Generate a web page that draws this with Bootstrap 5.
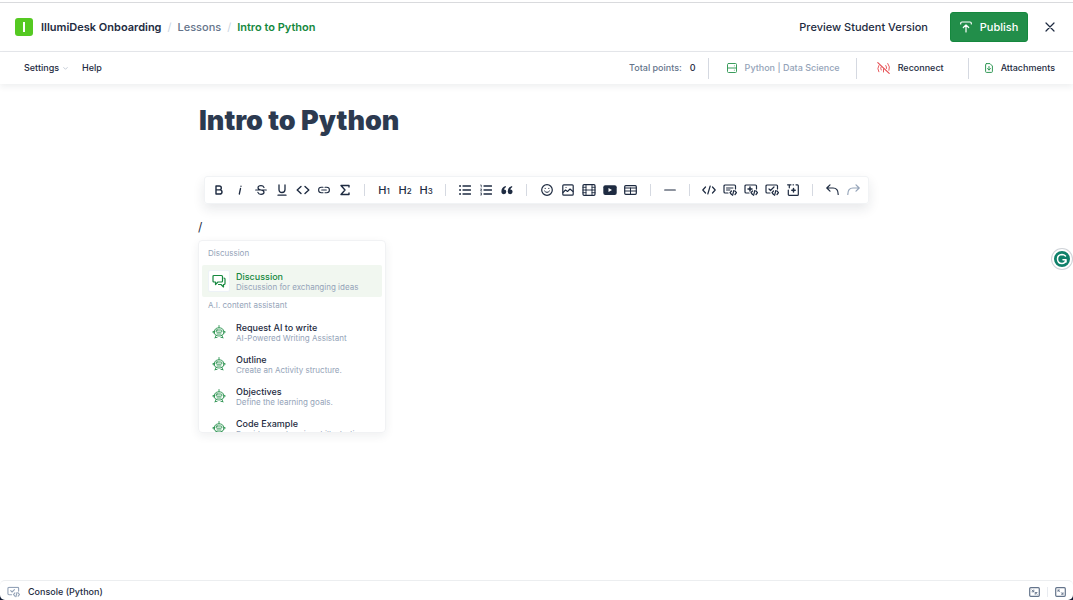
<!DOCTYPE html>
<html lang="en">
<head>
<meta charset="utf-8">
<meta name="viewport" content="width=device-width, initial-scale=1">
<title>Intro to Python</title>
<link href="https://cdn.jsdelivr.net/npm/bootstrap@5.3.0/dist/css/bootstrap.min.css" rel="stylesheet">
<style>
  :root { --ink: #1e2b41; --slate: #64748b; --mist: #94a3b8; --line: #e5e7eb; --leaf: #15883e; }
  body { font-family: Inter, "Liberation Sans", sans-serif; font-size: 9px; line-height: 12px; font-weight: 500; color: var(--ink); background: #fff; }
  a { color: inherit; text-decoration: none; }
  svg { display: block; flex: none; fill: none; stroke: currentColor; stroke-width: 1.2; stroke-linecap: round; stroke-linejoin: round; }
  svg.fine { stroke-width: .8; }
  .plain { border: 0; padding: 0; background: none; color: inherit; font: inherit; }
  .topbar { height: 50px; margin-top: 2px; padding: 0 17px 0 15px; border-top: 1px solid #d9dadd; border-bottom: 1px solid var(--line); font-size: 11px; line-height: 16px; }
  .logo-tile { width: 18px; height: 18px; border-radius: 3px; background: #55c922; }
  .logo-tile span { width: 2px; height: 10px; background: #fff; }
  .crumbs { gap: 6px; }
  .crumbs .sep { color: #cbd5e1; font-weight: 400; }
  .crumbs .parent { color: var(--slate); }
  .crumbs .current { color: var(--leaf); }
  .header-actions { gap: 22px; }
  .publish { height: 30px; width: 78px; gap: 8px; border: 1px solid #15883e; border-radius: 3px; background: #228e4a; color: #fff; font-size: 11px; font-weight: 500; }
  .subbar { height: 32px; padding: 0 18px 0 24px; box-shadow: 0 3px 6px rgba(30,41,59,.07); }
  .subbar-menu { gap: 14px; }
  .vr-line { width: 1px; height: 21px; background: #d5d9e1; }
  .after-points { margin: 0 18px 0 12px; }
  .after-kernel { margin: 0 20px 0 16px; }
  .editor { width: 100%; max-width: 675px; }
  .page-title { font-size: 27px; line-height: 36px; font-weight: 900; color: #2c3a50; margin: 19px 0 0; }
  .tools { margin: 37px 5px 0; height: 28px; padding: 0 4px 0 3px; border: 1px solid #f1f3f5; border-radius: 3px; box-shadow: 0 5px 12px rgba(30,41,59,.10); }
  .tool { width: 21px; height: 22px; display: flex; align-items: center; justify-content: center; }
  .tool.heading { align-items: baseline; font-size: 11px; line-height: 22px; }
  .tool.heading span { font-size: 8px; }
  .tool-sep { width: 18px; display: flex; justify-content: center; }
  .tool-sep::before { content: ""; width: 1px; height: 12px; background: #d5d9e1; }
  .typed { margin: 15px 0 0 -1px; font-size: 12px; line-height: 16px; font-weight: 400; }
  .slash-menu { width: 188px; height: 193px; margin: 5px 0 0 -1px; padding: 0 3px; overflow: hidden; border: 1px solid #f1f2f4; border-radius: 4px; box-shadow: 0 3px 10px rgba(30,41,59,.07); font-size: 9px; line-height: 11px; }
  .group-name { padding: 7px 6px; margin: 0; font-size: 8px; line-height: 10px; font-weight: 400; color: var(--mist); }
  .option + .group-name { padding: 3px 6px 6px; }
  .option { width: 100%; height: 32px; padding: 0 6px; gap: 6px; text-align: left; border-radius: 2px; }
  .option .tile { width: 22px; height: 22px; border-radius: 2px; color: var(--leaf); display: flex; align-items: center; justify-content: center; }
  .option .desc { font-size: 8px; line-height: 10px; font-weight: 400; color: var(--mist); white-space: nowrap; }
  .option.chosen { background: #f1f7f0; color: var(--leaf); }
  .option.chosen .tile { background: #fff; border: 1px solid #edf2f7; }
  .dock { background: linear-gradient(#fff 50%, #101a33 50%); }
  .dock-in { height: 20px; padding: 3px 7px 0 7px; border-top: 1px solid #eceef0; border-radius: 5px; background: #fff; }
  .dock-actions { gap: 7px; color: #64748b; }
  .dock-line { width: 1px; height: 10px; background: #e8ebf0; }
  .helper { right: 1px; top: 249px; width: 20px; height: 20px; border-radius: 50%; background: #0f806a; border: 2px solid #fff; box-shadow: 0 0 0 1px #cfd3d8; color: #fff; }
</style>
</head>
<body class="d-flex flex-column min-vh-100">

<svg width="0" height="0" class="position-absolute" aria-hidden="true">
  <symbol id="chat" viewBox="0 0 14 14"><path d="M2 1.500H9.500Q10.500 1.500 10.500 2.500V7Q10.500 8 9.500 8H6L3.500 10.500V8H2Q1 8 1 7V2.500Q1 1.500 2 1.500M12 4Q13 4 13 5V9.500Q13 10.500 12 10.500H11.500V13L9 10.500H6.500"/></symbol>
  <symbol id="robot" viewBox="0 0 14 14"><path d="M7 .5V2.800M2.300 7Q2.300 2.800 7 2.800Q11.700 2.800 11.700 7Q11.700 11 7 11Q2.300 11 2.300 7ZM2.300 6L.6 7L2.300 8.500M11.700 6L13.400 7L11.700 8.500M5 5H9Q10 5 10 6Q10 7.200 9 7.200H5Q4 7.200 4 6Q4 5 5 5ZM5 9H9M4 10.500L3 13M10 10.500L11 13M3.500 12.500H5M9 12.500H10.500"/></symbol>
  <symbol id="code-corner" viewBox="0 0 14 12"><path d="M5 9H2.200Q1 9 1 8V2Q1 1 2.200 1H11.500Q12.500 1 12.500 2V5M8.500 7L7 8.700L8.500 10.500M12 7L13.500 8.700L12 10.500M10.800 6.500L9.600 11.300"/></symbol>
</svg>

<header class="topbar d-flex align-items-center justify-content-between">
  <nav aria-label="Breadcrumb" class="d-flex align-items-center">
    <a href="#" class="logo-tile d-flex align-items-center justify-content-center me-2" aria-label="Home"><span></span></a>
    <ol class="crumbs list-unstyled d-flex m-0">
      <li class="fw-semibold"><a href="#">IllumiDesk Onboarding</a></li>
      <li class="sep" aria-hidden="true">/</li>
      <li class="parent"><a href="#">Lessons</a></li>
      <li class="sep" aria-hidden="true">/</li>
      <li class="current fw-semibold" aria-current="page">Intro to Python</li>
    </ol>
  </nav>
  <div class="header-actions d-flex align-items-center">
    <a href="#">Preview Student Version</a>
    <div class="d-flex align-items-center gap-3">
      <button type="button" class="publish d-flex align-items-center justify-content-center p-0">
        <svg width="12" height="12" viewBox="0 0 12 12"><path d="M.7 3V2.300Q.7 1 2 1H10Q11.300 1 11.300 2.300V3M6 11V4M3.300 6.500L6 3.800L8.700 6.500"/></svg>Publish
      </button>
      <button type="button" class="plain" aria-label="Close"><svg width="12" height="12" viewBox="0 0 12 12"><path d="M2 2L10 10M10 2L2 10"/></svg></button>
    </div>
  </div>
</header>

<nav class="subbar d-flex align-items-center justify-content-between">
  <div class="subbar-menu d-flex align-items-center">
    <button type="button" class="plain d-flex align-items-center gap-1">Settings
      <svg width="5" height="5" viewBox="0 0 5 5" style="color:#b6bfcc" class="fine"><path d="M.7 1.500L2.500 3.300L4.300 1.500"/></svg></button>
    <a href="#">Help</a>
  </div>
  <div class="d-flex align-items-center">
    <span style="color:var(--slate)">Total points:</span><span class="ms-2">0</span>
    <span class="vr-line after-points"></span>
    <a href="#" class="d-flex align-items-center gap-2" style="color:var(--mist)">
      <svg width="10" height="10" viewBox="0 0 10 10" style="color:#3a9d5c"><path d="M1.500 .5H8.500Q9.500 .5 9.500 1.500V8.500Q9.500 9.500 8.500 9.500H1.500Q.5 9.500 .5 8.500V1.500Q.5 .5 1.500 .5ZM.5 5H9.500" stroke-width="1"/><path d="M7.300 2.800H7.400M7.300 7.200H7.400" stroke-width=".8"/></svg>Python | Data Science</a>
    <span class="vr-line after-kernel"></span>
    <button type="button" class="plain d-flex align-items-center gap-2">
      <svg width="13" height="12" viewBox="0 0 13 12" style="color:#e5484d"><path d="M.8 .6L12.200 11.400" stroke-width="1.100"/><path d="M1.800 3.500Q-.2 6.500 1.800 9.800M4 5Q3.300 6.500 4.200 8M10.800 1.500Q13.500 4.800 12 8.300M8.800 3.500Q9.900 5 9.500 6.500M6.500 7V10" stroke-width=".9"/></svg>Reconnect</button>
    <span class="vr-line ms-4 me-3"></span>
    <a href="#" class="d-flex align-items-center gap-2">
      <svg width="8" height="10" viewBox="0 0 8 10" style="color:#2f9854"><path d="M1.500 .6H5L7.400 3V8.500Q7.400 9.400 6.500 9.400H1.500Q.6 9.400 .6 8.500V1.500Q.6 .6 1.500 .6ZM4 3.500V7M2.500 5.600L4 7L5.500 5.600" stroke-width="1"/></svg>Attachments</a>
  </div>
</nav>

<main class="editor mx-auto flex-grow-1">
  <h1 class="page-title">Intro to Python</h1>

  <div class="tools d-flex align-items-center justify-content-between" role="toolbar" aria-label="Formatting">
    <button type="button" class="plain tool" aria-label="Bold"><svg width="12" height="12" viewBox="0 0 12 12"><path d="M3 2V10H6.700Q9 10 9 7.900Q9 5.900 6.700 5.900H3M3 2H6.300Q8.300 2 8.300 3.900Q8.300 5.900 6.300 5.900" stroke-width="1.400"/></svg></button>
    <button type="button" class="plain tool" aria-label="Italic"><svg width="12" height="12" viewBox="0 0 12 12"><path d="M6.500 4.500L5.300 10M7 2.200V2.300" stroke-width="1.300"/></svg></button>
    <button type="button" class="plain tool" aria-label="Strikethrough"><svg width="12" height="12" viewBox="0 0 12 12"><path d="M.7 6H11.300M9 3.500Q8.300 1.700 6 1.700Q3 1.700 3 3.700Q3 5.500 6 6Q9 6.500 9 8.300Q9 10.300 6 10.300Q3.500 10.300 2.900 8.300"/></svg></button>
    <button type="button" class="plain tool" aria-label="Underline"><svg width="12" height="12" viewBox="0 0 12 12"><path d="M3 1V5.500Q3 8.500 6 8.500Q9 8.500 9 5.500V1M2 11.200H10" stroke-width="1.300"/></svg></button>
    <button type="button" class="plain tool" aria-label="Inline code"><svg width="14" height="12" viewBox="0 0 14 12"><path d="M5 2.500L1.200 6L5 9.500M9 2.500L12.800 6L9 9.500" stroke-width="1.400"/></svg></button>
    <button type="button" class="plain tool" aria-label="Link"><svg width="12" height="12" viewBox="0 0 12 12"><path d="M5 3.300H3.300Q.6 3.300 .6 6Q.6 8.700 3.300 8.700H5M7 3.300H8.700Q11.400 3.300 11.400 6Q11.400 8.700 8.700 8.700H7M3.700 6H8.300" stroke-width="1.100"/></svg></button>
    <button type="button" class="plain tool" aria-label="Formula"><svg width="12" height="12" viewBox="0 0 12 12"><path d="M10 3V1.500H2L6 6L2 10.500H10V9" stroke-width="1.400"/></svg></button>
    <span class="tool-sep"></span>
    <button type="button" class="plain tool heading">H<span>1</span></button>
    <button type="button" class="plain tool heading">H<span>2</span></button>
    <button type="button" class="plain tool heading">H<span>3</span></button>
    <span class="tool-sep"></span>
    <button type="button" class="plain tool" aria-label="Bulleted list"><svg width="12" height="12" viewBox="0 0 12 12"><path d="M4 2H11.500M4 6H11.500M4 10H11.500" stroke-width="1.300"/><path d="M1 2H1.100M1 6H1.100M1 10H1.100" stroke-width="1.800"/></svg></button>
    <button type="button" class="plain tool" aria-label="Numbered list"><svg width="12" height="12" viewBox="0 0 12 12"><path d="M4 2H11.500M4 6H11.500M4 10H11.500" stroke-width="1.300"/><path d="M.6 1H1.300V3M.6 5H1.700L.6 7H1.700M.6 9H1.700L1.200 10L1.700 11H.6" stroke-width=".7"/></svg></button>
    <button type="button" class="plain tool" aria-label="Quote"><svg width="12" height="12" viewBox="0 0 12 12"><path d="M4.700 2Q.4 3 .4 7.500Q.4 10.200 2.900 10.200Q5.300 10.200 5.300 7.800Q5.300 5.600 3 5.500Q3.300 4 5 3ZM11 2Q6.700 3 6.700 7.500Q6.700 10.200 9.200 10.200Q11.600 10.200 11.600 7.800Q11.600 5.600 9.300 5.500Q9.600 4 11.300 3Z" fill="currentColor" stroke="none"/></svg></button>
    <span class="tool-sep"></span>
    <button type="button" class="plain tool" aria-label="Emoji"><svg width="12" height="12" viewBox="0 0 12 12"><circle cx="6" cy="6" r="5.300"/><path d="M3.500 7Q6 10 8.500 7M4.200 4.300V4.600M7.800 4.300V4.600" stroke-width="1"/></svg></button>
    <button type="button" class="plain tool" aria-label="Image"><svg width="12" height="12" viewBox="0 0 12 12"><rect x=".8" y=".8" width="10.400" height="10.400" rx="1"/><path d="M1 8.500L3.500 6L5.500 7.500L8 5L11 7.500M4 3.500H4.100" stroke-width="1.100"/></svg></button>
    <button type="button" class="plain tool" aria-label="Video"><svg width="14" height="12" viewBox="0 0 14 12"><rect x="1" y=".7" width="12" height="10.600" rx="1"/><path d="M4 .7V11.300M10 .7V11.300M4 6H10M1 3.300H4M1 6H4M1 8.700H4M10 3.300H13M10 6H13M10 8.700H13" stroke-width=".9"/></svg></button>
    <button type="button" class="plain tool" aria-label="Embed video"><svg width="14" height="12" viewBox="0 0 14 12"><rect x=".3" y="1.200" width="13.400" height="9.800" rx="2" fill="currentColor" stroke="none"/><path d="M5.500 4L9 6L5.500 8Z" fill="#fff" stroke="none"/></svg></button>
    <button type="button" class="plain tool" aria-label="Table"><svg width="13" height="12" viewBox="0 0 13 12"><rect x=".7" y="1.700" width="11.600" height="8.600" rx="1"/><path d="M.7 4H12.300M.7 7H12.300M6.500 4V10" stroke-width="1"/></svg></button>
    <span class="tool-sep"></span>
    <button type="button" class="plain tool" aria-label="Divider"><svg width="12" height="12" viewBox="0 0 12 12"><path d="M.7 6H11.300" stroke-width="1.200"/></svg></button>
    <span class="tool-sep"></span>
    <button type="button" class="plain tool" aria-label="Code block"><svg width="14" height="12" viewBox="0 0 14 12"><path d="M3.500 3L.8 6L3.500 9M10.500 3L13.200 6L10.500 9M8.200 2L5.800 10"/></svg></button>
    <button type="button" class="plain tool" aria-label="Text exercise"><svg width="14" height="12" viewBox="0 0 14 12"><use href="#code-corner"/><path d="M3.500 4H10M3.500 6H7" stroke-width="1"/></svg></button>
    <button type="button" class="plain tool" aria-label="New exercise"><svg width="14" height="12" viewBox="0 0 14 12"><use href="#code-corner"/><path d="M6 3V7M4 5H8" stroke-width="1.500"/></svg></button>
    <button type="button" class="plain tool" aria-label="Graded exercise"><svg width="14" height="12" viewBox="0 0 14 12"><use href="#code-corner"/><path d="M4 5L5.500 6.500L9 3"/></svg></button>
    <button type="button" class="plain tool" aria-label="Insert test"><svg width="12" height="12" viewBox="0 0 12 12"><path d="M.6 .8H4M2.300 .8V3.800M6 .8H6.500M9 .8H10.500Q11.300 .8 11.300 1.700V10.400Q11.300 11.300 10.400 11.300H2.200Q1.300 11.300 1.300 10.400V6"/><path d="M6.500 4.500V8M4.800 6.300H8.200" stroke-width="1.500"/></svg></button>
    <span class="tool-sep"></span>
    <button type="button" class="plain tool" aria-label="Undo"><svg width="13" height="12" viewBox="0 0 13 12"><path d="M4 .8L.8 4L4 7.200M1 4H7Q12.200 4 12.200 10.500"/></svg></button>
    <button type="button" class="plain tool" aria-label="Redo" style="color:var(--mist)"><svg width="13" height="12" viewBox="0 0 13 12"><path d="M9 .8L12.200 4L9 7.200M12 4H6Q.8 4 .8 10.500"/></svg></button>
  </div>

  <p class="typed">/</p>

  <div class="slash-menu" role="menu">
    <p class="group-name">Discussion</p>
    <button type="button" role="menuitem" class="plain option chosen d-flex align-items-center"><span class="tile"><svg width="14" height="14"><use href="#chat"/></svg></span><span><span class="d-block">Discussion</span><span class="desc d-block">Discussion for exchanging ideas</span></span></button>
    <p class="group-name">A.I. content assistant</p>
    <button type="button" role="menuitem" class="plain option d-flex align-items-center"><span class="tile"><svg class="fine" width="14" height="14"><use href="#robot"/></svg></span><span><span class="d-block">Request AI to write</span><span class="desc d-block">AI-Powered Writing Assistant</span></span></button>
    <button type="button" role="menuitem" class="plain option d-flex align-items-center"><span class="tile"><svg class="fine" width="14" height="14"><use href="#robot"/></svg></span><span><span class="d-block">Outline</span><span class="desc d-block">Create an Activity structure.</span></span></button>
    <button type="button" role="menuitem" class="plain option d-flex align-items-center"><span class="tile"><svg class="fine" width="14" height="14"><use href="#robot"/></svg></span><span><span class="d-block">Objectives</span><span class="desc d-block">Define the learning goals.</span></span></button>
    <button type="button" role="menuitem" class="plain option d-flex align-items-center"><span class="tile"><svg class="fine" width="14" height="14"><use href="#robot"/></svg></span><span><span class="d-block">Code Example</span><span class="desc d-block">Provide a code snippet illustration</span></span></button>
  </div>
</main>

<button type="button" class="plain helper position-fixed d-flex align-items-center justify-content-center" aria-label="Writing assistant"><svg width="12" height="12" viewBox="0 0 12 12"><path d="M9.500 3Q8 1.500 6 1.500Q1.500 1.700 1.500 6Q1.700 10.500 6 10.500Q9.500 10.400 10 6.700H7M10 6.700V9" stroke-width="1.500"/></svg></button>

<footer class="dock">
  <div class="dock-in d-flex align-items-center justify-content-between">
    <button type="button" class="plain d-flex align-items-center">
      <svg width="13" height="12" viewBox="0 0 14 12" class="me-2" style="color:var(--mist)"><use href="#code-corner"/><path d="M4 4.500L5.500 6L8 3.500"/></svg>Console (Python)</button>
    <div class="dock-actions d-flex align-items-center">
      <button type="button" class="plain" aria-label="Minimize"><svg width="11" height="10" viewBox="0 0 11 10"><rect x=".7" y=".7" width="9.600" height="8.600" rx="1"/><path d="M3 3L4.500 4.500M4.800 3V4.800H3M8 7.300L6.500 5.800M6.200 7.300V5.500H8" stroke-width=".9"/></svg></button>
      <span class="dock-line"></span>
      <button type="button" class="plain" aria-label="Expand"><svg width="11" height="10" viewBox="0 0 11 10"><rect x=".7" y=".7" width="9.600" height="8.600" rx="1"/><path d="M3 4.500V3H4.500M3 3L4.500 4.500M6.500 7.200H8V5.700M8 7.200L6.500 5.700" stroke-width=".9"/></svg></button>
    </div>
  </div>
</footer>
<script src="https://cdn.jsdelivr.net/npm/bootstrap@5.3.0/dist/js/bootstrap.bundle.min.js"></script>
</body>
</html>
